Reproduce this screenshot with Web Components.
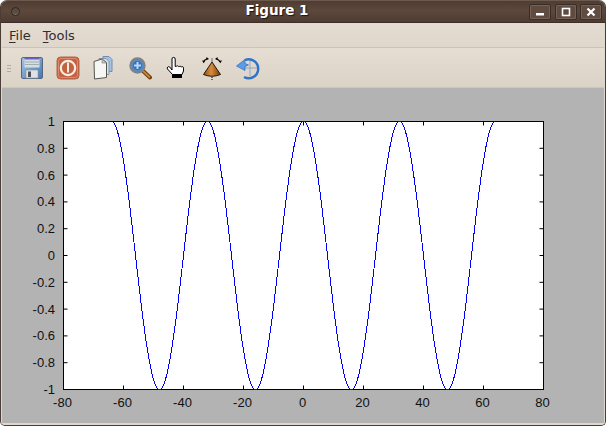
<!DOCTYPE html>
<html>
<head>
<meta charset="utf-8">
<title>Figure 1</title>
<style>
  html, body { margin: 0; padding: 0; background: #fff; }
  body { width: 606px; height: 426px; overflow: hidden; font-family: "DejaVu Sans", sans-serif; }
</style>
</head>
<body>
<fig-window>
  <fig-titlebar slot="title">Figure 1</fig-titlebar>
  <fig-menubar slot="menu">
    <fig-menu key="F" rest="ile"></fig-menu>
    <fig-menu key="T" rest="ools"></fig-menu>
  </fig-menubar>
  <fig-toolbar slot="tools">
    <fig-tool icon="save"></fig-tool>
    <fig-tool icon="stop"></fig-tool>
    <fig-tool icon="copy"></fig-tool>
    <fig-tool icon="zoom"></fig-tool>
    <fig-tool icon="hand"></fig-tool>
    <fig-tool icon="rotate"></fig-tool>
    <fig-tool icon="reset"></fig-tool>
  </fig-toolbar>
  <fig-plot></fig-plot>
</fig-window>

<script>
// window frame
class FigWindow extends HTMLElement {
  constructor() {
    super();
    this.attachShadow({ mode: 'open' });
    this.shadowRoot.innerHTML = `
      <style>
        :host { display: block; width: 606px; height: 426px; }
        .frame {
          box-sizing: border-box; width: 606px; height: 426px;
          display: flex; flex-direction: column;
          background: #b3b3b3;
          border-radius: 7px 7px 5px 5px;
          border: 1px solid #4a3d35;
          border-top-color: #6d5a4e;
          overflow: hidden;
        }
        .body {
          flex: 1; display: flex; flex-direction: column; min-height: 0;
          border-left: 1px solid #e0d8cd;
          border-right: 1px solid #e0d8cd;
          border-bottom: 2px solid #e0d8cd;
        }
      </style>
      <div class="frame">
        <slot name="title"></slot>
        <div class="body">
          <slot name="menu"></slot>
          <slot name="tools"></slot>
          <slot></slot>
        </div>
      </div>`;
  }
}

class FigTitlebar extends HTMLElement {
  constructor() {
    super();
    this.attachShadow({ mode: 'open' });
    this.shadowRoot.innerHTML = `
      <style>
        :host { display: block; flex: none; }
        .bar {
          height: 21px; display: flex; align-items: center; position: relative;
          background: linear-gradient(#4f3c32, #5d483c 45%, #4e3b31);
          border-bottom: 1px solid #3d2f28;
        }
        .orb {
          width: 7px; height: 7px; margin-left: 10px; border-radius: 50%;
          border: 1px solid #2e2420; background: #5b4a40;
          box-shadow: inset 0 -1px 1px #8a7b70;
        }
        .name {
          position: absolute; left: 0; right: 52px; top: 0; height: 19px;
          text-align: center; color: #fff; font: bold 13.5px/19px "DejaVu Sans", sans-serif;
          text-shadow: 1px 1px 1px #1d1410;
        }
        .btns { margin-left: auto; margin-right: 3px; display: flex; gap: 3.5px; }
        .btn {
          box-sizing: border-box; width: 22px; height: 16px; border-radius: 2px;
          border: 1px solid #382c26; background: #5f4b40;
          box-shadow: inset 0 0 0 1px #75635a;
          display: flex; align-items: center; justify-content: center;
        }
        svg { display: block; }
      </style>
      <div class="bar">
        <div class="orb"></div>
        <div class="name"><slot></slot></div>
        <div class="btns">
          <div class="btn"><svg width="10" height="10"><rect x="1" y="6" width="8" height="2.500" fill="#fff"/></svg></div>
          <div class="btn"><svg width="10" height="10"><rect x="1.500" y="1.500" width="7" height="7" fill="none" stroke="#fff" stroke-width="1.600"/></svg></div>
          <div class="btn"><svg width="10" height="10"><path d="M1.500 1.500L8.500 8.500M8.500 1.500L1.500 8.500" stroke="#fff" stroke-width="2.200"/></svg></div>
        </div>
      </div>`;
  }
}

class FigMenubar extends HTMLElement {
  constructor() {
    super();
    this.attachShadow({ mode: 'open' });
    this.shadowRoot.innerHTML = `
      <style>
        :host {
          display: flex; flex: none; height: 25px; box-sizing: border-box;
          padding-left: 7px; gap: 12px; align-items: center;
          background: linear-gradient(#e4dcd2, #dfd7cc);
          border-bottom: 1px solid #cdc3b6;
        }
      </style>
      <slot></slot>`;
  }
}

class FigMenu extends HTMLElement {
  constructor() {
    super();
    this.attachShadow({ mode: 'open' });
    this.shadowRoot.innerHTML = `
      <style>
        :host { display: block; font: 13px "DejaVu Sans", sans-serif; color: #2f2f2f; }
        u { text-underline-offset: 2px; }
      </style>
      <span><u>${this.getAttribute('key')}</u>${this.getAttribute('rest')}</span>`;
  }
}

class FigToolbar extends HTMLElement {
  constructor() {
    super();
    this.attachShadow({ mode: 'open' });
    this.shadowRoot.innerHTML = `
      <style>
        :host {
          display: flex; flex: none; height: 40px; box-sizing: border-box;
          align-items: center; padding-left: 5px;
          background: linear-gradient(#e6ddd3, #dcd3c7);
          border-bottom: 1px solid #cfc6ba;
        }
        .grip { width: 4px; height: 7px; margin-right: 3px; margin-top: 1px;
          background: repeating-linear-gradient(#b3a99d 0 1px, transparent 1px 3px); }
        .tools { display: flex; }
      </style>
      <div class="grip"></div>
      <div class="tools"><slot></slot></div>`;
  }
}

const ICONS = {
  save: `
    <defs><linearGradient id="b" x1="0" y1="0" x2="1" y2="1"><stop offset="0" stop-color="#a9c5e4"/><stop offset="1" stop-color="#4078b4"/></linearGradient></defs>
    <rect x="1.500" y="1.500" width="21" height="21" rx="1.500" fill="url(#b)" stroke="#56677d"/>
    <rect x="4.500" y="2" width="15" height="9.500" fill="#d8dce6"/>
    <rect x="4.500" y="2" width="15" height="1.500" fill="#6a63c0"/>
    <path d="M5 6h14M5 8.500h14" stroke="#9fb0a8" stroke-width="1"/>
    <rect x="6" y="14" width="12" height="8" fill="#dfe1e2" stroke="#8b939b" stroke-width=".6"/>
    <rect x="8" y="15.500" width="3" height="5.500" fill="#4a4f56"/>`,
  stop: `
    <rect x="1" y="1" width="22" height="22" rx="3.500" fill="#c4623f" stroke="#b4654c"/>
    <rect x="2.500" y="2.500" width="19" height="19" rx="2.500" fill="none" stroke="#d98a6a" stroke-width="1"/>
    <circle cx="12" cy="12" r="7.200" fill="none" stroke="#f6ece4" stroke-width="2.200"/>
    <rect x="11" y="6.500" width="2" height="10" fill="#f6ece4"/>`,
  copy: `
    <path d="M11 .5h6l3 3v12h-9z" fill="#a3c2e6" stroke="#6f8fb2"/>
    <path d="M7 2.500h7l3 3v13h-10z" fill="#d4e0ec" stroke="#8a98a6"/>
    <path d="M2 5.500l8-2.500 4.500 3.500v15l-12 1.500z" fill="#f6f6f4" stroke="#55554f"/>
    <path d="M10 3v4h4.500z" fill="#c8c8c4" stroke="#77776f" stroke-width=".6"/>`,
  zoom: `
    <path d="M14.500 14.500l7.500 7" stroke="#6f3f12" stroke-width="4" stroke-linecap="round"/>
    <path d="M15 15l6.500 6" stroke="#c98434" stroke-width="1.800" stroke-linecap="round"/>
    <circle cx="9.500" cy="9.500" r="7" fill="#4a8fd6" stroke="#7d8287" stroke-width="2.400"/>
    <circle cx="9.500" cy="9.500" r="4.500" fill="#3672b8"/>
    <path d="M6 9.500h7M9.500 6v7" stroke="#b9d8f2" stroke-width="2"/>`,
  hand: `
    <path d="M8 14V3a1.600 1.600 0 0 1 3.200 0v7.500l1.300-.3a1.300 1.300 0 0 1 2 .4l.7-.1a1.300 1.300 0 0 1 2 .6a1.300 1.300 0 0 1 2.300 1V15l-1.500 3.500H8.500L3.500 13a1.500 1.500 0 0 1 2.200-2z" fill="#fff" stroke="#000" stroke-width="1"/>
    <rect x="8" y="18" width="10" height="4" fill="#000"/>`,
  rotate: `
    <defs><linearGradient id="c" x1="0" x2="1" y1="0" y2="0"><stop offset="0" stop-color="#8a5218"/><stop offset=".45" stop-color="#d98c3c"/><stop offset="1" stop-color="#6e3e10"/></linearGradient></defs>
    <path d="M12 6L3.500 18.500Q12 22 20.500 18.500z" fill="url(#c)" stroke="#1f1408" stroke-width="1"/>
    <path d="M12 2.500v3M12 21v3" stroke="#000" stroke-width="1" stroke-dasharray="1 1"/>
    <path d="M3.500 6Q4.500 3.500 7 3M16.500 3Q19 3.500 20 6" fill="none" stroke="#000" stroke-width="1.100"/>
    <path d="M2 4.500l3.200.2-1.500 2.600zM22 4.500l-3.200.2 1.500 2.600zM6.500 1l2.500 2-2.800 1.200zM17.500 1l-2.500 2 2.800 1.200z" fill="#000"/>`,
  reset: `
    <path d="M14 4v16M6 12h16" stroke="#8ea7c2" stroke-width="1"/>
    <path d="M9 4a9.500 9.500 0 1 1-1 17" fill="none" stroke="#2f74c8" stroke-width="2.400"/>
    <path d="M.5 10L9 3.500v4l3.500 1.500-3.500 1.500v4z" fill="#5c9ce6" stroke="#2a69b8" stroke-width=".7"/>`
};

class FigTool extends HTMLElement {
  constructor() {
    super();
    this.attachShadow({ mode: 'open' });
    this.shadowRoot.innerHTML = `
      <style>
        :host { display: flex; width: 36px; height: 24px; align-items: center; justify-content: center; }
        svg { display: block; overflow: visible; filter: blur(.25px); }
      </style>
      <svg width="24" height="24" viewBox="0 0 24 24">${ICONS[this.getAttribute('icon')] || ''}</svg>`;
  }
}

// axes and curve, drawn from the same numbers as the octave figure
class FigPlot extends HTMLElement {
  constructor() {
    super();
    this.attachShadow({ mode: 'open' });
  }

  connectedCallback() {
    const L = 63.5, T = 121.5, W = 480, H = 268;
    const px = x => L + (x + 80) / 160 * W;
    const py = y => T + (1 - y) / 2 * H;
    let ticks = '', labels = '';
    for (let x = -80; x <= 80; x += 20) {
      if (x > -80 && x < 80) {
        ticks += `M${px(x)} ${T}v4M${px(x)} ${T + H}v-4`;
      }
      labels += `<text x="${px(x) - 1}" y="407" text-anchor="middle">${x}</text>`;
    }
    for (let i = -5; i <= 5; i++) {
      const y = i / 5;
      if (i > -5 && i < 5) {
        ticks += `M${L} ${py(y)}h4M${L + W} ${py(y)}h-4`;
      }
      labels += `<text x="55" y="${py(y) + 4.5}" text-anchor="end">${i === 0 ? 0 : y.toFixed(i % 5 ? 1 : 0)}</text>`;
    }
    const pts = [];
    for (let x = -63.4; x <= 64.001; x += 0.2) {
      pts.push(px(x).toFixed(2) + ',' + py(Math.cos(2 * Math.PI * x / 32)).toFixed(2));
    }
    this.shadowRoot.innerHTML = `
      <style>
        :host { display: block; flex: 1; min-height: 0; position: relative; }
        svg { position: absolute; left: -2px; top: -88px; display: block; }
        text { font: 13px "Liberation Sans", Arial, sans-serif; fill: #111; }
      </style>
      <svg width="606" height="426" viewBox="0 0 606 426">
        <rect x="${L}" y="${T}" width="${W}" height="${H}" fill="#fff" stroke="#000"/>
        <path d="${ticks}" stroke="#000" fill="none"/>
        <polyline points="${pts.join(' ')}" fill="none" stroke="#0000ff" stroke-width="1" shape-rendering="crispEdges"/>
        ${labels}
      </svg>`;
  }
}

customElements.define('fig-window', FigWindow);
customElements.define('fig-titlebar', FigTitlebar);
customElements.define('fig-menubar', FigMenubar);
customElements.define('fig-menu', FigMenu);
customElements.define('fig-toolbar', FigToolbar);
customElements.define('fig-tool', FigTool);
customElements.define('fig-plot', FigPlot);
</script>
</body>
</html>
